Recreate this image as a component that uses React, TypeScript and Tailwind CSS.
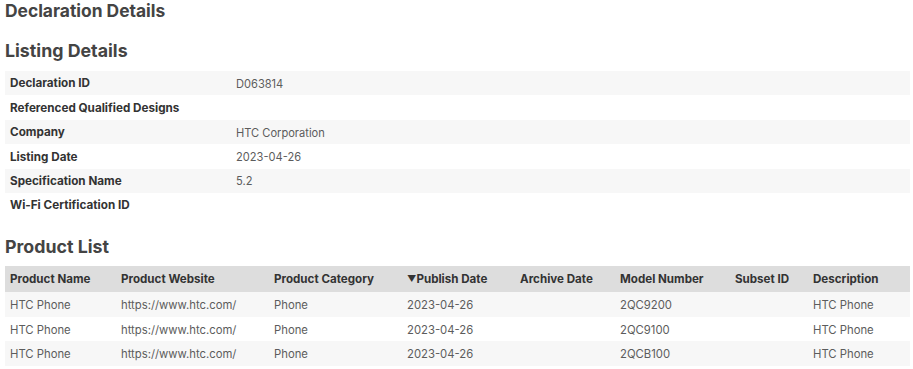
const listing: [string, string][] = [
  ["Declaration ID", "D063814"],
  ["Referenced Qualified Designs", ""],
  ["Company", "HTC Corporation"],
  ["Listing Date", "2023-04-26"],
  ["Specification Name", "5.2"],
  ["Wi-Fi Certification ID", ""],
];

const products = [
  { name: "HTC Phone", site: "https://www.htc.com/", cat: "Phone", pub: "2023-04-26", arch: "", model: "2QC9200", subset: "", desc: "HTC Phone" },
  { name: "HTC Phone", site: "https://www.htc.com/", cat: "Phone", pub: "2023-04-26", arch: "", model: "2QC9100", subset: "", desc: "HTC Phone" },
  { name: "HTC Phone", site: "https://www.htc.com/", cat: "Phone", pub: "2023-04-26", arch: "", model: "2QCB100", subset: "", desc: "HTC Phone" },
];

const cols = [
  { label: "Product Name", w: "w-[111px]" },
  { label: "Product Website", w: "w-[153px]" },
  { label: "Product Category", w: "w-[133px]" },
  { label: "Publish Date", w: "w-[113px]", sorted: true },
  { label: "Archive Date", w: "w-[100px]" },
  { label: "Model Number", w: "w-[115px]" },
  { label: "Subset ID", w: "w-[78px]" },
  { label: "Description", w: "w-[102px]" },
];

export default function App() {
  return (
    <main className="w-[913px] h-[369px] overflow-hidden bg-white pl-[5px] pr-[3px] font-['Inter','Open_Sans',sans-serif] text-[#333]">
      <h1 className="text-[17.4px] font-bold text-[#444] leading-[22px]">Declaration Details</h1>

      <h2 className="text-[17.8px] font-bold text-[#444] leading-[24px] mt-[17px]">Listing Details</h2>
      <table className="w-full table-fixed mt-[8px]">
        <colgroup>
          <col className="w-[226px]" />
          <col />
        </colgroup>
        <tbody>
          {listing.map(([k, v], i) => (
            <tr key={k} className={i % 2 === 0 ? "bg-[#f7f7f7] h-[24.4px]" : "bg-white h-[24.4px]"}>
              <td className="px-[5px] pt-[2px] pb-0 text-[11.7px] font-bold text-[#333]">{k}</td>
              <td className="px-[5px] pt-[2px] pb-0 text-[11.1px] text-[#5c5c5c]">{v}</td>
            </tr>
          ))}
        </tbody>
      </table>

      <h2 className="text-[17.8px] font-bold text-[#444] leading-[24px] mt-[18px]">Product List</h2>
      <table className="w-full table-fixed mt-[7px]">
        <colgroup>
          {cols.map((c) => (
            <col key={c.label} className={c.w} />
          ))}
        </colgroup>
        <thead>
          <tr className="bg-[#dddddd] h-[26px]">
            {cols.map((c) => (
              <th key={c.label} className="px-[5px] pt-[1px] pb-0 text-left text-[11.6px] font-bold text-[#333] whitespace-nowrap">
                {c.sorted && <span className="text-[9px] align-[1px]">▼</span>}
                {c.label}
              </th>
            ))}
          </tr>
        </thead>
        <tbody>
          {products.map((p, i) => (
            <tr key={p.model} className={i % 2 === 0 ? "bg-[#f7f7f7] h-[24.5px]" : "bg-white h-[24.5px]"}>
              {[p.name, p.site, p.cat, p.pub, p.arch, p.model, p.subset, p.desc].map((v, j) => (
                <td key={j} className="px-[5px] pt-[2px] pb-0 text-[11.3px] text-[#5c5c5c] whitespace-nowrap">{v}</td>
              ))}
            </tr>
          ))}
        </tbody>
      </table>
    </main>
  );
}
